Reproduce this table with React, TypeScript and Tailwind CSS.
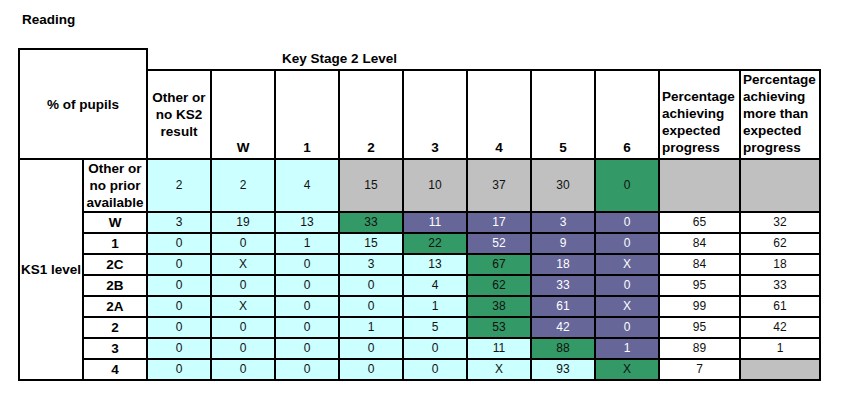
import React from "react";

type Tone = "c" | "g" | "G" | "P" | "w";

const tone: Record<Tone, string> = {
  c: "bg-[#ccffff] text-[#111]",
  g: "bg-[#c0c0c0] text-[#111]",
  G: "bg-[#339966] text-[#111]",
  P: "bg-[#666699] text-white",
  w: "bg-white text-[#111]",
};

const ks2Cols = ["W", "1", "2", "3", "4", "5", "6"];

const rows: { label: string; cells: [string, Tone][] }[] = [
  { label: "W", cells: [["3", "c"], ["19", "c"], ["13", "c"], ["33", "G"], ["11", "P"], ["17", "P"], ["3", "P"], ["0", "P"], ["65", "w"], ["32", "w"]] },
  { label: "1", cells: [["0", "c"], ["0", "c"], ["1", "c"], ["15", "c"], ["22", "G"], ["52", "P"], ["9", "P"], ["0", "P"], ["84", "w"], ["62", "w"]] },
  { label: "2C", cells: [["0", "c"], ["X", "c"], ["0", "c"], ["3", "c"], ["13", "c"], ["67", "G"], ["18", "P"], ["X", "P"], ["84", "w"], ["18", "w"]] },
  { label: "2B", cells: [["0", "c"], ["0", "c"], ["0", "c"], ["0", "c"], ["4", "c"], ["62", "G"], ["33", "P"], ["0", "P"], ["95", "w"], ["33", "w"]] },
  { label: "2A", cells: [["0", "c"], ["X", "c"], ["0", "c"], ["0", "c"], ["1", "c"], ["38", "G"], ["61", "P"], ["X", "P"], ["99", "w"], ["61", "w"]] },
  { label: "2", cells: [["0", "c"], ["0", "c"], ["0", "c"], ["1", "c"], ["5", "c"], ["53", "G"], ["42", "P"], ["0", "P"], ["95", "w"], ["42", "w"]] },
  { label: "3", cells: [["0", "c"], ["0", "c"], ["0", "c"], ["0", "c"], ["0", "c"], ["11", "c"], ["88", "G"], ["1", "P"], ["89", "w"], ["1", "w"]] },
  { label: "4", cells: [["0", "c"], ["0", "c"], ["0", "c"], ["0", "c"], ["0", "c"], ["X", "c"], ["93", "c"], ["X", "G"], ["7", "w"], ["", "g"]] },
];

const firstRow: [string, Tone][] = [
  ["2", "c"], ["2", "c"], ["4", "c"], ["15", "g"], ["10", "g"], ["37", "g"], ["30", "g"], ["0", "G"], ["", "g"], ["", "g"],
];

export default function App() {
  return (
    <div
      className="w-[846px] h-[402px] bg-white text-black pt-[12px] pl-[18px]"
      style={{ fontFamily: '"Liberation Sans", Arial, sans-serif' }}
    >
      <h1 className="pl-[4px] text-[13.5px] font-bold leading-[16px]">Reading</h1>
      <table className="mt-[20px] border-collapse table-fixed text-[12px] leading-[17px]">
        <colgroup>
          <col className="w-[64px]" />
          <col className="w-[64px]" />
          {Array.from({ length: 8 }).map((_, i) => (
            <col key={i} className="w-[64px]" />
          ))}
          <col className="w-[81px]" />
          <col className="w-[80px]" />
        </colgroup>
        <thead>
          <tr className="h-[21px]">
            <th
              colSpan={2}
              rowSpan={2}
              className="border-2 border-black text-[13.5px] font-bold align-middle"
            >
              % of pupils
            </th>
            <th colSpan={6} className="border-0 text-[13.5px] font-bold pb-[2px] align-middle">
              Key Stage 2 Level
            </th>
            <th colSpan={4} className="border-0" />
          </tr>
          <tr className="h-[87px] text-[13.5px] font-bold">
            <th className="border-2 border-black align-middle px-[2px]">
              Other or no KS2 result
            </th>
            {ks2Cols.map((c) => (
              <th key={c} className="border-2 border-black align-bottom pb-[2px]">
                {c}
              </th>
            ))}
            <th className="border-2 border-black align-bottom text-left pl-[2px] pb-[2px]">
              Percentage achieving expected progress
            </th>
            <th className="border-2 border-black align-bottom text-left pl-[2px] pb-[2px]">
              Percentage achieving more than expected progress
            </th>
          </tr>
        </thead>
        <tbody>
          <tr className="h-[52px]">
            <th
              rowSpan={9}
              className="border-2 border-black text-[13.5px] font-bold text-left pl-[1px] pr-0 whitespace-nowrap overflow-hidden align-middle"
            >
              KS1 level
            </th>
            <th className="border-2 border-black text-[13.5px] font-bold">
              Other or no prior available
            </th>
            {firstRow.map(([v, t], i) => (
              <td key={i} className={`border-2 border-black text-center ${tone[t]}`}>
                {v}
              </td>
            ))}
          </tr>
          {rows.map((r) => (
            <tr key={r.label} className="h-[21px]">
              <th className="border-2 border-black text-[13.5px] font-bold">{r.label}</th>
              {r.cells.map(([v, t], i) => (
                <td key={i} className={`border-2 border-black text-center ${tone[t]}`}>
                  {v}
                </td>
              ))}
            </tr>
          ))}
        </tbody>
      </table>
    </div>
  );
}
